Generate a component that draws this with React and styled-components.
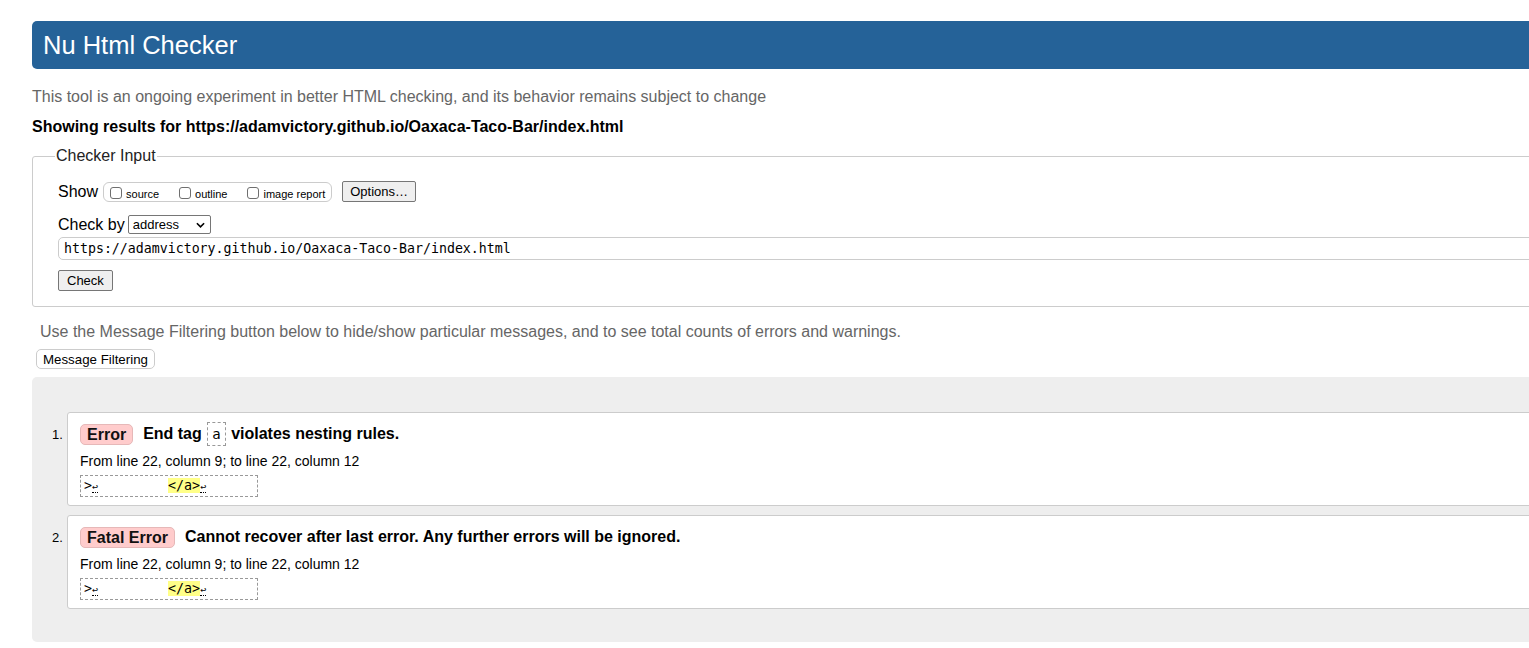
import React from "react";
import styled, { createGlobalStyle } from "styled-components";

const GlobalStyle = createGlobalStyle`
  html, body {
    margin: 0;
    padding: 0;
    background: #fff;
    overflow: hidden;
  }
  body {
    font-family: "Liberation Sans", Arial, sans-serif;
    color: #000;
  }
`;

const messages = [
  {
    n: 1,
    kind: "Error",
    before: "End tag",
    code: "a",
    after: "violates nesting rules.",
    where: "From line 22, column 9; to line 22, column 12",
  },
  {
    n: 2,
    kind: "Fatal Error",
    before: "Cannot recover after last error. Any further errors will be ignored.",
    where: "From line 22, column 9; to line 22, column 12",
  },
];

const App = () => {
  return (
    <>
      <GlobalStyle />
      <Page>
        <Header>
          <Title>Nu Html Checker</Title>
        </Header>
        <Intro>
          This tool is an ongoing experiment in better HTML checking, and its
          behavior remains subject to change
        </Intro>
        <Showing>
          Showing results for https://adamvictory.github.io/Oaxaca-Taco-Bar/index.html
        </Showing>

        <Fieldset>
          <Legend>Checker Input</Legend>
          <Row $top={10}>
            <RowLabel>Show</RowLabel>
            <CheckGroup>
              <CheckItem>
                <Box />
                source
              </CheckItem>
              <CheckItem>
                <Box />
                outline
              </CheckItem>
              <CheckItem>
                <Box />
                image report
              </CheckItem>
            </CheckGroup>
            <Button>Options…</Button>
          </Row>
          <Row $top={13}>
            <RowLabel>Check by</RowLabel>
            <Select>
              <span>address</span>
              <Chevron viewBox="0 0 10 6">
                <path d="M1 1 L5 5 L9 1" />
              </Chevron>
            </Select>
          </Row>
          <UrlInput>https://adamvictory.github.io/Oaxaca-Taco-Bar/index.html</UrlInput>
          <CheckButton>Check</CheckButton>
        </Fieldset>

        <FilterNote>
          Use the Message Filtering button below to hide/show particular
          messages, and to see total counts of errors and warnings.
        </FilterNote>
        <FilterButton>Message Filtering</FilterButton>

        <Results>
          <MessageList>
            {messages.map((m) => (
              <Message key={m.n}>
                <Num>{m.n}.</Num>
                <Card>
                  <MessageHead>
                    <Badge>{m.kind}</Badge>
                    <span>
                      {m.before}
                      {m.code && (
                        <>
                          {" "}
                          <Code>{m.code}</Code> {m.after}
                        </>
                      )}
                    </span>
                  </MessageHead>
                  <Location>{m.where}</Location>
                  <Extract>
                    <Mark>&gt;</Mark>
                    <Lf>↩</Lf>
                    <Gap>{"        "}</Gap>
                    <Hl>&lt;/a&gt;</Hl>
                    <Lf>↩</Lf>
                  </Extract>
                </Card>
              </Message>
            ))}
          </MessageList>
        </Results>
      </Page>
    </>
  );
};

export default App;

/* page */
const Page = styled.div`
  width: 1640px;
  padding: 21px 0 0 32px;
`;

const Header = styled.header`
  background: #256298;
  border-radius: 5px;
  height: 48px;
  display: flex;
  align-items: center;
  padding: 0 11px;
`;

const Title = styled.h1`
  margin: 0;
  color: #fff;
  font-size: 25.5px;
  font-weight: normal;
`;

const Intro = styled.p`
  margin: 18px 0 0;
  font-size: 16px;
  color: #666;
  line-height: 19px;
`;

const Showing = styled.p`
  margin: 11px 0 0;
  font-size: 16px;
  font-weight: bold;
  line-height: 19px;
`;

/* checker input */
const Fieldset = styled.fieldset`
  margin: 11px 0 0;
  padding: 6px 25px 15px;
  border: 1px solid #ccc;
  border-radius: 3px;
`;

const Legend = styled.legend`
  font-size: 16px;
  padding: 0 1px;
  margin-left: -3px;
  color: #222;
`;

const Row = styled.div`
  display: flex;
  align-items: center;
  gap: 5px;
  margin-top: ${(p) => p.$top ?? 6}px;
`;

const RowLabel = styled.span`
  font-size: 16px;
`;

const CheckGroup = styled.div`
  display: flex;
  align-items: center;
  gap: 20px;
  border: 1px solid #ccc;
  border-radius: 6px;
  height: 20px;
  box-sizing: border-box;
  padding: 0 6px 0 6px;
  margin-right: 5px;
`;

const CheckItem = styled.label`
  display: flex;
  align-items: flex-end;
  font-size: 11px;
  line-height: 12px;
  gap: 4px;
  padding-top: 3px;
`;

const Box = styled.span`
  width: 12px;
  height: 12px;
  border: 1px solid #6f6f6f;
  border-radius: 3px;
  box-sizing: border-box;
  margin-bottom: 1px;
`;

const Button = styled.button`
  font-family: "Liberation Sans", Arial, sans-serif;
  font-size: 13px;
  color: #000;
  background: #efefef;
  border: 1px solid #767676;
  border-radius: 2px;
  height: 21px;
  padding: 0 7px;
`;

const Select = styled.div`
  display: flex;
  align-items: center;
  justify-content: space-between;
  width: 83px;
  height: 19px;
  box-sizing: border-box;
  border: 1px solid #767676;
  border-radius: 2px;
  padding: 0 5px 0 4px;
  font-size: 13px;
  margin-left: -2px;
`;

const Chevron = styled.svg`
  width: 9px;
  height: 6px;
  fill: none;
  stroke: #000;
  stroke-width: 1.8;
`;

const UrlInput = styled.div`
  margin-top: 3px;
  height: 23px;
  box-sizing: border-box;
  border: 1px solid #ccc;
  border-radius: 5px;
  padding: 0 5px;
  display: flex;
  align-items: center;
  font-family: "DejaVu Sans Mono", monospace;
  font-size: 13.25px;
`;

const CheckButton = styled(Button)`
  margin-top: 10px;
  padding: 0 8px;
  display: block;
`;

/* message filtering */
const FilterNote = styled.p`
  margin: 15px 0 0 8px;
  font-size: 16px;
  color: #666;
  line-height: 19px;
`;

const FilterButton = styled.button`
  margin: 8px 0 0 4px;
  font-family: "Liberation Sans", Arial, sans-serif;
  font-size: 13.3px;
  color: #000;
  background: #fff;
  border: 1px solid #ccc;
  border-radius: 5px;
  height: 20px;
  padding: 0 6px;
`;

/* results */
const Results = styled.div`
  margin-top: 8px;
  background: #eee;
  border-radius: 5px;
  height: 265px;
  padding-top: 35px;
  box-sizing: border-box;
`;

const MessageList = styled.ol`
  list-style: none;
  margin: 0;
  padding: 0 0 0 20px;
  display: flex;
  flex-direction: column;
  gap: 9px;
`;

const Message = styled.li`
  display: flex;
  align-items: flex-start;
`;

const Num = styled.span`
  width: 15px;
  font-size: 13px;
  line-height: 15px;
  padding-top: 15px;
`;

const Card = styled.div`
  flex: 1;
  background: #fff;
  border: 1px solid #ccc;
  border-radius: 3px;
  padding: 9px 12px 8px;
`;

const MessageHead = styled.div`
  display: flex;
  align-items: center;
  gap: 10px;
  height: 24px;
  font-size: 16px;
  font-weight: bold;
`;

const Badge = styled.span`
  background: #fcc;
  border: 1px solid #e6b8b8;
  border-radius: 5px;
  padding: 0 6px;
  line-height: 19px;
  color: #111;
`;

const Code = styled.code`
  display: inline-block;
  border: 1px dashed #999;
  font-family: "DejaVu Sans Mono", monospace;
  font-weight: normal;
  font-size: 14px;
  padding: 3px 4px;
  margin: 0 1px;
  line-height: 16px;
`;

const Location = styled.p`
  margin: 7px 0 0;
  font-size: 14px;
  line-height: 16px;
`;

const Extract = styled.div`
  display: inline-block;
  margin-top: 6px;
  border: 1px dashed #999;
  padding: 2px 3px;
  width: 178px;
  box-sizing: border-box;
  font-family: "DejaVu Sans Mono", monospace;
  font-size: 13.3px;
  line-height: 15px;
  white-space: pre;
  vertical-align: top;
`;

const Mark = styled.b`
  font-weight: normal;
`;

const Lf = styled.b`
  font-weight: normal;
  font-size: 10px;
  border-bottom: 1px dotted #000;
`;

const Gap = styled.span`
  margin-right: 6px;
`;

const Hl = styled.b`
  font-weight: normal;
  background: #ff8;
`;
